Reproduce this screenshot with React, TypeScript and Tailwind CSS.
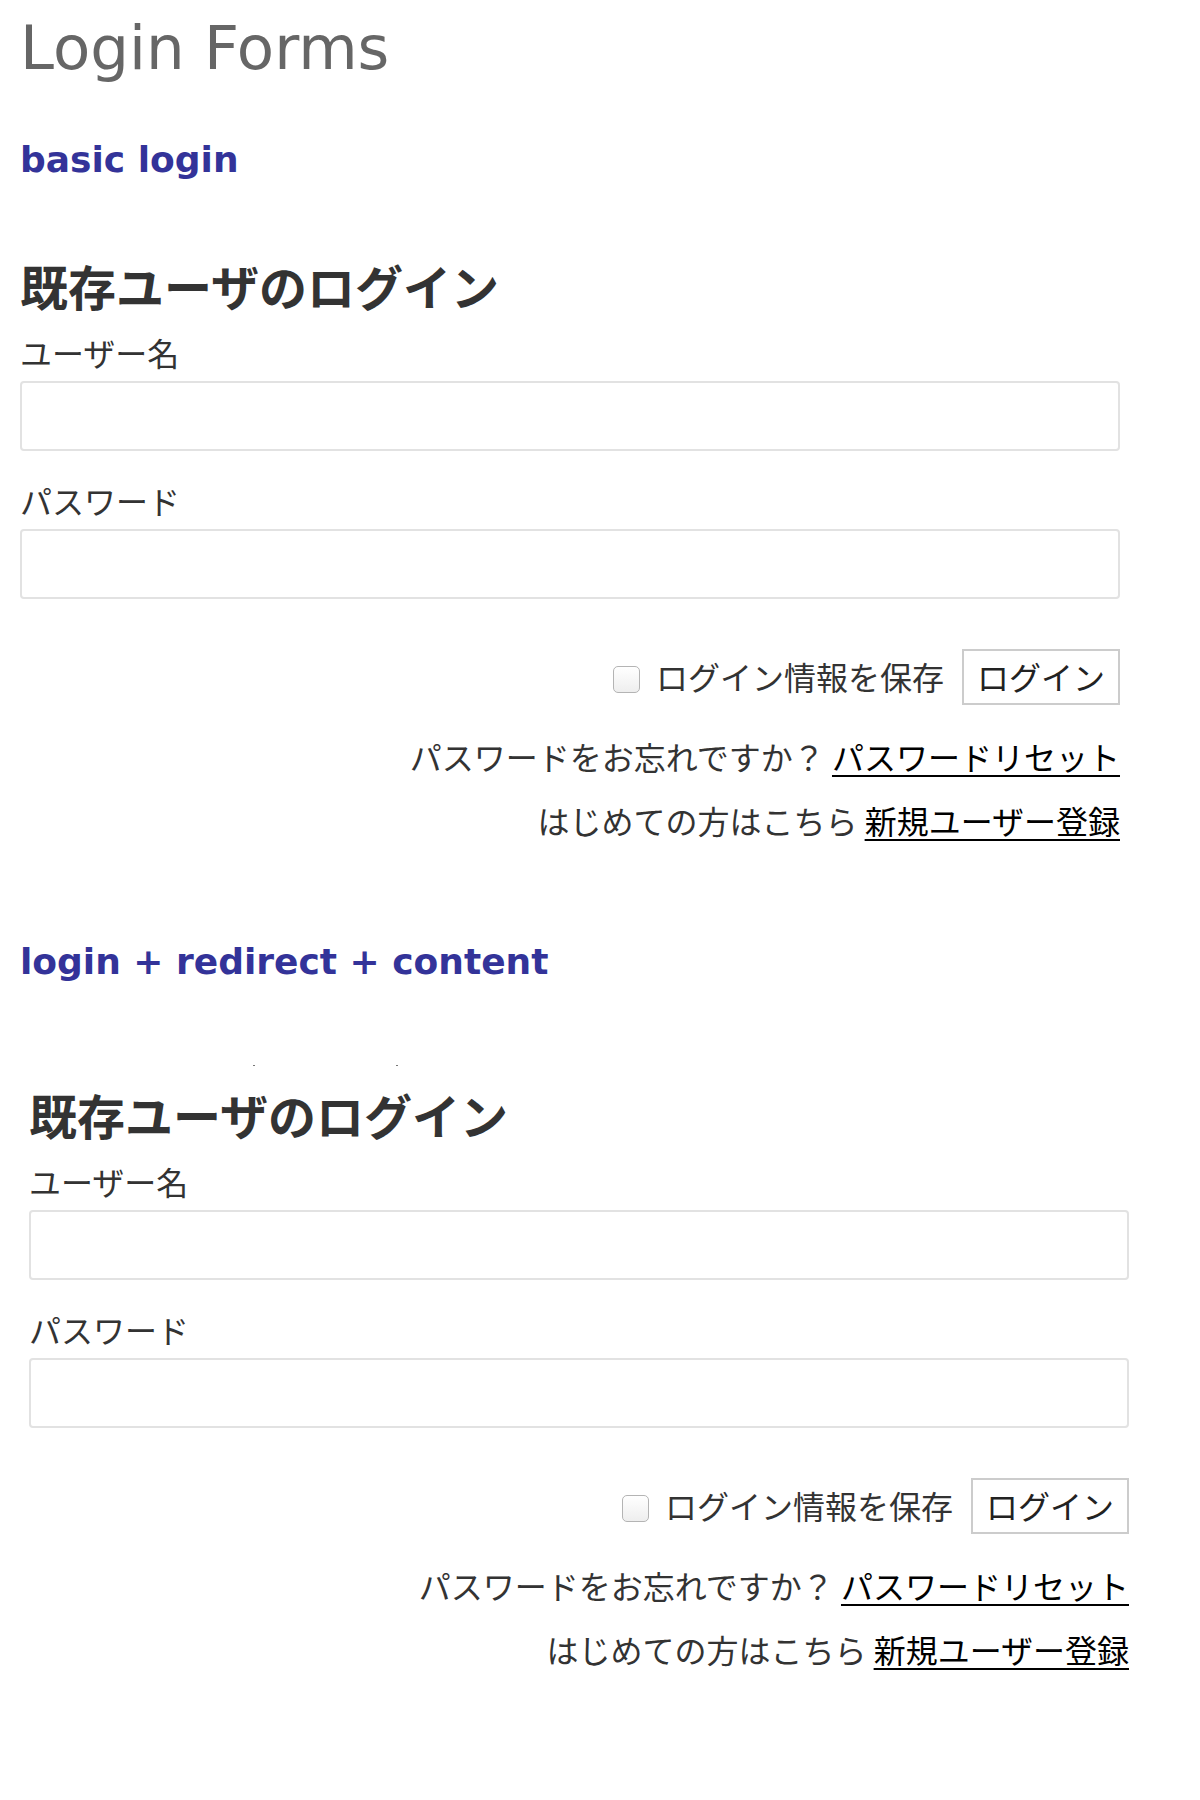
import React from "react";

function LoginForm() {
  return (
    <div className="w-[1100px] font-['Noto_Sans_CJK_JP',sans-serif] text-[#333]">
      <h3 className="text-[48px] leading-[60px] font-bold text-[#333]">既存ユーザのログイン</h3>
      <label className="block mt-[17px] text-[32px] leading-[40px]">ユーザー名</label>
      <input
        type="text"
        className="block mt-[9px] w-full h-[70px] border-2 border-[#e2e2e2] rounded-[4px] bg-white"
      />
      <label className="block mt-[29px] text-[32px] leading-[40px]">パスワード</label>
      <input
        type="password"
        className="block mt-[9px] w-full h-[70px] border-2 border-[#e2e2e2] rounded-[4px] bg-white"
      />
      <div className="mt-[50px] h-[56px] flex items-center justify-end">
        <input
          type="checkbox"
          className="appearance-none shrink-0 box-border mt-[4px] w-[27px] h-[27px] rounded-[5px] border-[1.5px] border-[#b4b4b4] bg-gradient-to-b from-white to-[#eeeeee]"
        />
        <span className="ml-[16px] text-[32px] leading-[40px] -mt-[2px]">ログイン情報を保存</span>
        <button className="ml-[18px] h-[56px] px-[13px] border-2 border-[#cccccc] bg-white text-[32px] leading-[40px] text-[#222] pb-[3px]">
          ログイン
        </button>
      </div>
      <p className="mt-[19px] text-right text-[32px] leading-[64px]">
        パスワードをお忘れですか？{" "}
        <a className="text-black underline decoration-2 underline-offset-[5px]">パスワードリセット</a>
      </p>
      <p className="text-right text-[32px] leading-[64px]">
        はじめての方はこちら{" "}
        <a className="text-black underline decoration-2 underline-offset-[5px]">新規ユーザー登録</a>
      </p>
    </div>
  );
}

export default function App() {
  return (
    <div className="bg-white min-h-[1800px] w-[1200px] pl-[20px]">
      <h1 className="font-['DejaVu_Sans',sans-serif] text-[61px] leading-[96px] font-normal text-[#666]">
        Login Forms
      </h1>
      <h2 className="mt-[39px] font-['DejaVu_Sans',sans-serif] text-[36px] leading-[50px] font-bold text-[#333399]">
        basic login
      </h2>
      <div className="mt-[70px]">
        <LoginForm />
      </div>
      <h2 className="mt-[85px] font-['DejaVu_Sans',sans-serif] text-[36px] leading-[50px] font-bold text-[#333399]">
        login + redirect + content
      </h2>
      <div className="mt-[78px] h-[1px] flex">
        <span className="ml-[233px] w-[2px] h-[1px] bg-[#777]" />
        <span className="ml-[141px] w-[2px] h-[1px] bg-[#777]" />
      </div>
      <div className="mt-[18px] ml-[9px]">
        <LoginForm />
      </div>
    </div>
  );
}
